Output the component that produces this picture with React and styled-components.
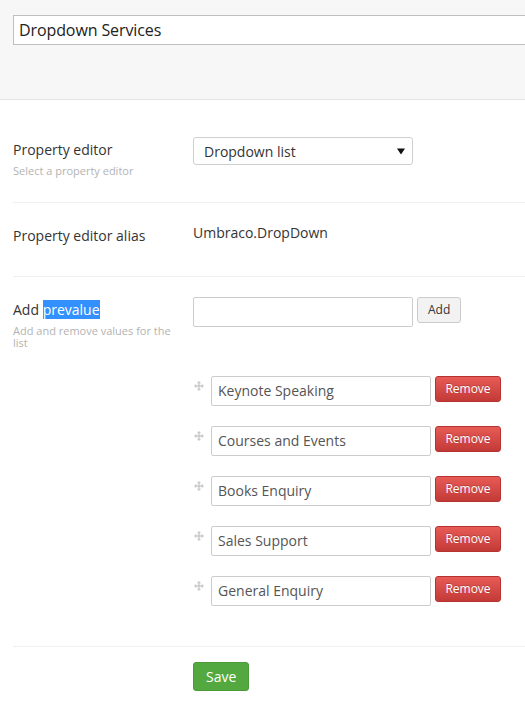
import React from "react";
import styled, { createGlobalStyle } from "styled-components";

const GlobalStyle = createGlobalStyle`
  html, body {
    margin: 0;
    padding: 0;
    background: #fff;
    font-family: "Open Sans", "Liberation Sans", sans-serif;
    color: #343434;
  }
  * { box-sizing: border-box; }
`;

const Header = styled.header`
  height: 100px;
  background: #f7f7f7;
  border-bottom: 1px solid #e4e4e4;
  padding: 15px 0 0 13px;
  overflow: hidden;
`;

const NameInput = styled.div`
  width: 560px;
  height: 30px;
  border: 1px solid #bfbfbf;
  background: #fff;
  padding: 0 5px;
  font-size: 16px;
  letter-spacing: -0.1px;
  line-height: 28px;
  color: #222;
  white-space: nowrap;
`;

const Content = styled.main`
  padding: 37px 0 0 13px;
`;

const Row = styled.section`
  display: flex;
  align-items: flex-start;
  border-bottom: 1px solid #f0f0f0;
  padding-bottom: ${(p) => p.$pb}px;
  & + & {
    padding-top: 20px;
  }
`;

const LabelCol = styled.div`
  width: 180px;
  flex-shrink: 0;
  padding: 3px 20px 0 0;
`;

const Label = styled.div`
  font-size: 14px;
  line-height: 20px;
  color: #343434;
`;

const Selected = styled.span`
  background: #3390ff;
  color: #fff;
`;

const Desc = styled.div`
  margin-top: 5px;
  font-size: 11px;
  line-height: 12px;
  color: #b3b3b3;
`;

const Controls = styled.div`
  display: flex;
  flex-direction: column;
`;

const Select = styled.div`
  width: 220px;
  height: 28px;
  border: 1px solid #cfcfcf;
  border-radius: 3px;
  background: #fff;
  display: flex;
  align-items: center;
  justify-content: space-between;
  padding: 0 7px 0 10px;
  font-size: 14px;
  color: #343434;
`;

const Value = styled.div`
  font-size: 14px;
  line-height: 20px;
  color: #343434;
`;

const InlineRow = styled.div`
  display: flex;
  align-items: flex-start;
  gap: 4px;
`;

const TextBox = styled.div`
  width: 220px;
  height: 30px;
  border: 1px solid #cccccc;
  border-radius: 2px;
  background: #fff;
  padding: 0 6px;
  font-size: 14px;
  line-height: 28px;
  color: #555;
  white-space: nowrap;
`;

const Button = styled.button`
  height: 26px;
  padding: 0 10px;
  border-radius: 3px;
  font-family: "Open Sans", "Liberation Sans", sans-serif;
  font-size: 12px;
  line-height: 24px;
  cursor: pointer;
`;

const AddButton = styled(Button)`
  border: 1px solid #cccccc;
  background: #f2f2f2;
  color: #333;
`;

const RemoveButton = styled(Button)`
  width: 66px;
  padding: 0;
  border: 1px solid #b53230;
  background: linear-gradient(#e85b57, #c23a36);
  color: #fff;
  text-shadow: 0 -1px 0 rgba(0, 0, 0, 0.2);
`;

const List = styled.div`
  display: flex;
  flex-direction: column;
  gap: 20px;
  margin-top: 49px;
`;

const Item = styled.div`
  display: flex;
  align-items: flex-start;
`;

const Handle = styled.div`
  width: 18px;
  padding: 5px 0 0 1px;
  display: flex;
`;

const Footer = styled.div`
  padding: 15px 0 20px 180px;
`;

const SaveButton = styled.button`
  height: 29px;
  padding: 0 12px;
  border: 1px solid #4a9a37;
  border-radius: 3px;
  background: #53a93f;
  color: #fff;
  font-family: "Open Sans", "Liberation Sans", sans-serif;
  font-size: 14px;
  cursor: pointer;
`;

const Caret = () => (
  <svg width="8" height="7" viewBox="0 0 8 7">
    <path d="M0 0.5h8L4 6.5z" fill="#111" />
  </svg>
);

const MoveIcon = () => (
  <svg width="10" height="10" viewBox="0 0 10 10">
    <path
      fill="#c9c9c9"
      d="M5 0L7.2 2.3H5.7V4.3H7.7V2.8L10 5 7.7 7.2V5.7H5.7V7.7H7.2L5 10 2.8 7.7H4.3V5.7H2.3V7.2L0 5 2.3 2.8V4.3H4.3V2.3H2.8z"
    />
  </svg>
);

const prevalues = [
  "Keynote Speaking",
  "Courses and Events",
  "Books Enquiry",
  "Sales Support",
  "General Enquiry",
];

export default function App() {
  return (
    <>
      <GlobalStyle />
      <Header>
        <NameInput>Dropdown Services</NameInput>
      </Header>
      <Content>
        <Row $pb={25}>
          <LabelCol>
            <Label>Property editor</Label>
            <Desc>Select a property editor</Desc>
          </LabelCol>
          <Controls>
            <Select>
              <span>Dropdown list</span>
              <Caret />
            </Select>
          </Controls>
        </Row>
        <Row $pb={30}>
          <LabelCol>
            <Label>Property editor alias</Label>
          </LabelCol>
          <Value>Umbraco.DropDown</Value>
        </Row>
        <Row $pb={40}>
          <LabelCol>
            <Label>
              Add <Selected>prevalue</Selected>
            </Label>
            <Desc>Add and remove values for the list</Desc>
          </LabelCol>
          <Controls>
            <InlineRow>
              <TextBox />
              <AddButton>Add</AddButton>
            </InlineRow>
            <List>
              {prevalues.map((v) => (
                <Item key={v}>
                  <Handle>
                    <MoveIcon />
                  </Handle>
                  <InlineRow>
                    <TextBox>{v}</TextBox>
                    <RemoveButton>Remove</RemoveButton>
                  </InlineRow>
                </Item>
              ))}
            </List>
          </Controls>
        </Row>
        <Footer>
          <SaveButton>Save</SaveButton>
        </Footer>
      </Content>
    </>
  );
}
